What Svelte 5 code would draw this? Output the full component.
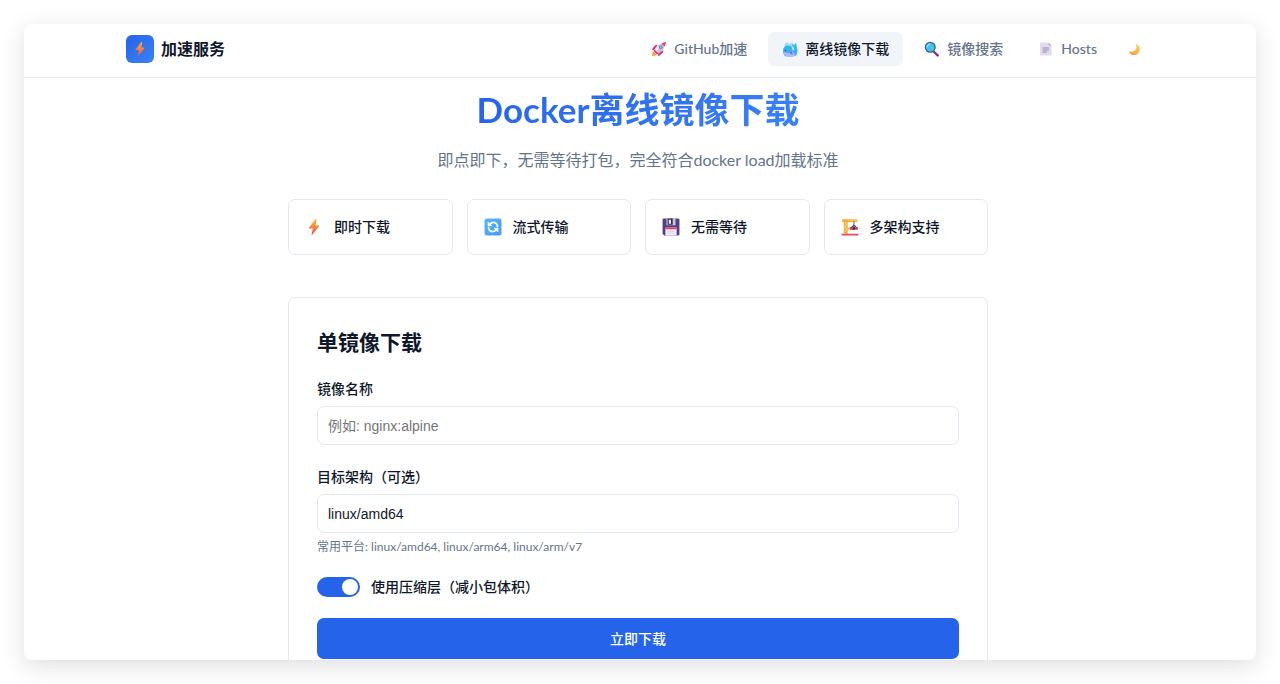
<script>
  let image = $state('');
  let platform = $state('linux/amd64');
  let compressed = $state(true);

  const nav = [
    { icon: 'rocket', label: 'GitHub加速' },
    { icon: 'whale', label: '离线镜像下载', active: true },
    { icon: 'search', label: '镜像搜索' },
    { icon: 'page', label: 'Hosts' }
  ];
  const features = [
    { icon: 'bolt', label: '即时下载' },
    { icon: 'sync', label: '流式传输' },
    { icon: 'disk', label: '无需等待' },
    { icon: 'crane', label: '多架构支持' }
  ];
</script>

{#snippet icon(name)}
  <svg class="icon" viewBox="0 0 32 32" aria-hidden="true">
    {#if name === 'bolt'}
      <defs>
        <linearGradient id="bolt-fill" x1="0" y1="0" x2="0" y2="1">
          <stop offset="0" stop-color="#ffb52e" />
          <stop offset="1" stop-color="#f4504a" />
        </linearGradient>
      </defs>
      <path d="M18.500 2 7 17.500q-.7 1.200.7 1.200h6.200L11.500 30q.2 1 1.100.2L25 14.500q.8-1.300-.8-1.300h-5.500L20.500 3q-.6-2-2-1Z" fill="url(#bolt-fill)" />
    {:else if name === 'rocket'}
      <path d="M8.500 17 3 18.500q-1.500-1.500 0-3.500l5-6q2-2 5.500-1.500ZM15 23.500 13.500 29q1.500 1.500 3.500 0l6-5q2-2 1.500-5.500Z" fill="#d8306c" />
      <path d="m5 21 6 6q-2 3-9 3 0-6 3-9Z" fill="#ff9a3d" />
      <path d="M7 18Q11 8 22 5l5 5q-3 11-13 15Z" fill="#c9bfdd" />
      <path d="M7 18q2-5 6-9l4 4-6 9Z" fill="#eee8f5" />
      <path d="M21 5q5-3 9-3 0 5-3 9Z" fill="#f13b62" />
      <circle cx="19.500" cy="12.500" r="3.500" fill="#637bb2" />
      <circle cx="19.500" cy="12.500" r="2" fill="#71c7ef" />
      <path d="m7 17 8 8-3 2-7-7Z" fill="#e0386b" />
    {:else if name === 'whale'}
      <defs>
        <linearGradient id="whale-fill" x1="0" y1="0" x2="0" y2="1">
          <stop offset="0" stop-color="#1fc0ee" />
          <stop offset="1" stop-color="#55a2fa" />
        </linearGradient>
      </defs>
      <path d="M5 9Q5 3 10 3q4 0 5 3 1-3 5-3 3 1 2 5l-3 5H8Z" fill="#a5dcfa" />
      <path d="M2 20Q2 9 12 9q8 0 9 8l2 2q2-1 1-5-5-3-4-8 4 0 5 3 0-4 3-5 2 3 1 7 2 4 2 9 0 10-9 11H11Q2 31 2 20Z" fill="url(#whale-fill)" />
      <path d="M3 22q9 4 18-1 3 2 5 8-3 2-8 2h-7Q4 29 3 22Z" fill="#bcb9ff" />
      <path d="M8 24v6M12 25v6M16 24v7" stroke="#8fa8fb" />
      <circle cx="7" cy="19" r="1.500" fill="#314d82" />
      <path d="M15 21q6 0 7 6-6 1-7-6Z" fill="#3488de" />
    {:else if name === 'search'}
      <path d="m20 19 9 8q2 2 0 4-2 1-4-1l-8-8Z" fill="#86367e" />
      <circle cx="12.500" cy="12.500" r="11" fill="#4c5681" />
      <circle cx="12.500" cy="12.500" r="8.500" fill="#38c7f2" />
      <path d="M6 12q0-6 6-6" fill="none" stroke="#a6edff" stroke-width="2" stroke-linecap="round" />
    {:else if name === 'page'}
      <path d="M4 4q0-1 1-1h16l6 6v19q0 1-1 1H5q-1 0-1-1Z" fill="#e4daee" />
      <path d="M21 3v5q0 1 1 1h5Z" fill="#bbaecd" />
      <path d="M10 14h11M10 18h11M10 22h7" stroke="#9687aa" stroke-width="2" stroke-linecap="round" />
    {:else if name === 'moon'}
      <defs>
        <linearGradient id="moon-fill" x1="0" y1="1" x2="1" y2="0">
          <stop offset="0" stop-color="#ef9748" />
          <stop offset="1" stop-color="#ffd75a" />
        </linearGradient>
      </defs>
      <path d="M22 3q9 5 7 15-2 11-14 12Q6 30 3 23q-1-2 1-2 10 2 15-5 4-5 1-11-1-3 2-2Z" fill="url(#moon-fill)" />
    {:else if name === 'sync'}
      <defs>
        <linearGradient id="sync-fill" x1="0" y1="0" x2="1" y2="1">
          <stop offset="0" stop-color="#55b8f8" />
          <stop offset="1" stop-color="#4598f5" />
        </linearGradient>
      </defs>
      <rect x="1" y="1" width="30" height="30" rx="4" fill="url(#sync-fill)" />
      <path d="M10 11q7-6 12-1 2 3 2 5M22 21q-7 6-12 1-2-3-2-5" fill="none" stroke="#fff" stroke-width="3" stroke-linecap="round" />
      <path d="M7 7v7h7ZM25 25v-7h-7Z" fill="#fff" stroke="#fff" stroke-linejoin="round" />
    {:else if name === 'disk'}
      <path d="M1 3q0-2 2-2h26q2 0 2 2v26q0 2-2 2H4l-3-3Z" fill="#54408a" />
      <path d="M8 1h16v12H8Z" fill="#cdc5de" />
      <path d="M10 1h9v11h-9Z" fill="#312b4a" />
      <path d="M12 3h4v7h-4Z" fill="#eee8f5" />
      <path d="M6 17h20v14H6Z" fill="#f4eef8" />
      <path d="M6 17h20v3H6Z" fill="#f33c65" />
      <path d="M9 24h14M9 27h14" stroke="#cec5dc" />
    {:else}
      <path d="M5 4h7v24H5ZM2 2h27v5H2Z" fill="#f4ad35" />
      <path d="M7 8l3 4-3 4 3 4-3 4M15 4h13" fill="none" stroke="#fbd76a" stroke-width="2" />
      <path d="M23 6v8" stroke="#53466d" stroke-width="1.500" />
      <path d="m17 18 6-5 6 5" fill="none" stroke="#51436c" stroke-width="2" />
      <path d="M16 17h14v4H16Z" fill="#c73b56" />
      <path d="M21 15h4v6h-4Z" fill="#403653" />
      <path d="M12 17h4v3h-4Z" fill="#f4ad35" />
      <path d="M1 28h30v3H1Z" fill="#ef4665" />
    {/if}
  </svg>
{/snippet}

<div class="page">
  <div class="window">
    <header>
      <div class="bar">
        <a class="brand" href="#home">
          <span class="logo">{@render icon('bolt')}</span>
          加速服务
        </a>
        <nav>
          {#each nav as item}
            <a class:active={item.active} href="#{item.icon}">
              {@render icon(item.icon)}<span>{item.label}</span>
            </a>
          {/each}
          <button class="theme" type="button" aria-label="切换主题">{@render icon('moon')}</button>
        </nav>
      </div>
    </header>

    <main>
      <h1>Docker离线镜像下载</h1>
      <p class="subtitle">即点即下，无需等待打包，完全符合docker load加载标准</p>

      <ul class="features">
        {#each features as item}
          <li>{@render icon(item.icon)}<span>{item.label}</span></li>
        {/each}
      </ul>

      <form class="card" onsubmit={(e) => e.preventDefault()}>
        <h2>单镜像下载</h2>
        <div class="field">
          <label for="image">镜像名称</label>
          <input id="image" type="text" placeholder="例如: nginx:alpine" bind:value={image} />
        </div>
        <div class="field">
          <label for="platform">目标架构（可选）</label>
          <input id="platform" type="text" bind:value={platform} />
          <p class="hint">常用平台: linux/amd64, linux/arm64, linux/arm/v7</p>
        </div>
        <label class="switch">
          <input type="checkbox" bind:checked={compressed} />
          <span>使用压缩层（减小包体积）</span>
        </label>
        <button class="submit" type="submit">立即下载</button>
      </form>
    </main>
  </div>
</div>

<style>
  :global(body) {
    background: #fff;
  }
  .page,
  .page * {
    box-sizing: border-box;
  }
  .page {
    height: 100vh;
    padding: 24px;
    overflow: hidden;
    color: #0f172a;
    font: 14px/24px Lato, "Noto Sans CJK SC", sans-serif;
  }
  .window {
    height: 100%;
    overflow: hidden;
    border-radius: 8px;
    background: #fff;
    box-shadow: 0 6px 24px rgba(0, 0, 0, 0.13);
  }
  header {
    padding-right: 4px;
    border-bottom: 1px solid #e2e8f0;
  }
  .bar {
    display: flex;
    align-items: center;
    justify-content: space-between;
    max-width: 1024px;
    height: 53px;
    margin: 0 auto;
    padding-bottom: 3px;
  }
  .icon {
    display: block;
    flex: none;
    width: 16px;
    height: 16px;
  }
  .brand {
    display: flex;
    align-items: center;
    gap: 7px;
    color: inherit;
    font-size: 16px;
    font-weight: 700;
    text-decoration: none;
  }
  .logo {
    display: grid;
    place-items: center;
    width: 28px;
    height: 28px;
    border-radius: 6px;
    background: linear-gradient(135deg, #2563eb, #3b82f6);
  }
  nav {
    display: flex;
    align-items: center;
    gap: 7px;
  }
  nav a {
    display: flex;
    align-items: center;
    gap: 7px;
    height: 34px;
    padding: 0 14px;
    border-radius: 6px;
    color: #64748b;
    font-weight: 500;
    text-decoration: none;
    white-space: nowrap;
  }
  nav a.active {
    background: #f1f5f9;
    color: #0f172a;
  }
  .theme {
    display: grid;
    place-items: center;
    width: 32px;
    height: 32px;
    padding: 0;
    border: 0;
    background: none;
  }
  .theme .icon {
    width: 13px;
    height: 13px;
  }
  main {
    max-width: 704px;
    margin: 0 auto;
    padding: 7px 4px 0 0;
  }
  h1 {
    width: fit-content;
    margin: 0 auto;
    background: linear-gradient(135deg, #2563eb, #3b82f6);
    background-clip: text;
    color: transparent;
    font-size: 35px;
    font-weight: 700;
    line-height: 48px;
  }
  .subtitle {
    margin: 15px 0 27px;
    color: #64748b;
    font-size: 16px;
    text-align: center;
  }
  .features {
    display: grid;
    grid-template-columns: repeat(4, 1fr);
    gap: 14px;
    margin: 0 0 42px;
    padding: 0;
    list-style: none;
  }
  .features li {
    display: flex;
    align-items: center;
    gap: 11px;
    height: 56px;
    padding: 0 16px;
    border: 1px solid #e2e8f0;
    border-radius: 7px;
    font-weight: 500;
  }
  .features .icon {
    width: 18px;
    height: 18px;
  }
  .card {
    padding: 28px;
    border: 1px solid #e2e8f0;
    border-radius: 7px;
  }
  h2 {
    margin: 0 0 19px;
    font-size: 21px;
    font-weight: 600;
    line-height: 32px;
  }
  .field {
    margin-bottom: 20px;
  }
  .field label {
    display: block;
    margin-bottom: 5px;
    font-weight: 500;
  }
  .field input {
    display: block;
    width: 100%;
    height: 39px;
    padding: 0 10px;
    border: 1px solid #e2e8f0;
    border-radius: 7px;
    background: #fff;
    color: #0f172a;
    font: 14px "Liberation Sans", "Noto Sans CJK SC", sans-serif;
  }
  .field input::placeholder {
    color: #757575;
  }
  .hint {
    margin: 4px 0 0;
    color: #64748b;
    font-size: 12px;
    line-height: 20px;
  }
  .switch {
    display: flex;
    align-items: center;
    gap: 11px;
    margin-bottom: 21px;
    font-weight: 500;
    line-height: 20px;
  }
  .switch input {
    appearance: none;
    display: flex;
    width: 43px;
    height: 20px;
    margin: 0;
    padding: 2px;
    border-radius: 10px;
    background: #cbd5e1;
  }
  .switch input::before {
    content: "";
    width: 16px;
    height: 16px;
    border-radius: 50%;
    background: #fff;
  }
  .switch input:checked {
    justify-content: flex-end;
    background: #2563eb;
  }
  .submit {
    display: block;
    width: 100%;
    height: 41px;
    border: 0;
    border-radius: 7px;
    background: #2563eb;
    color: #fff;
    font: inherit;
    font-weight: 500;
  }
</style>
